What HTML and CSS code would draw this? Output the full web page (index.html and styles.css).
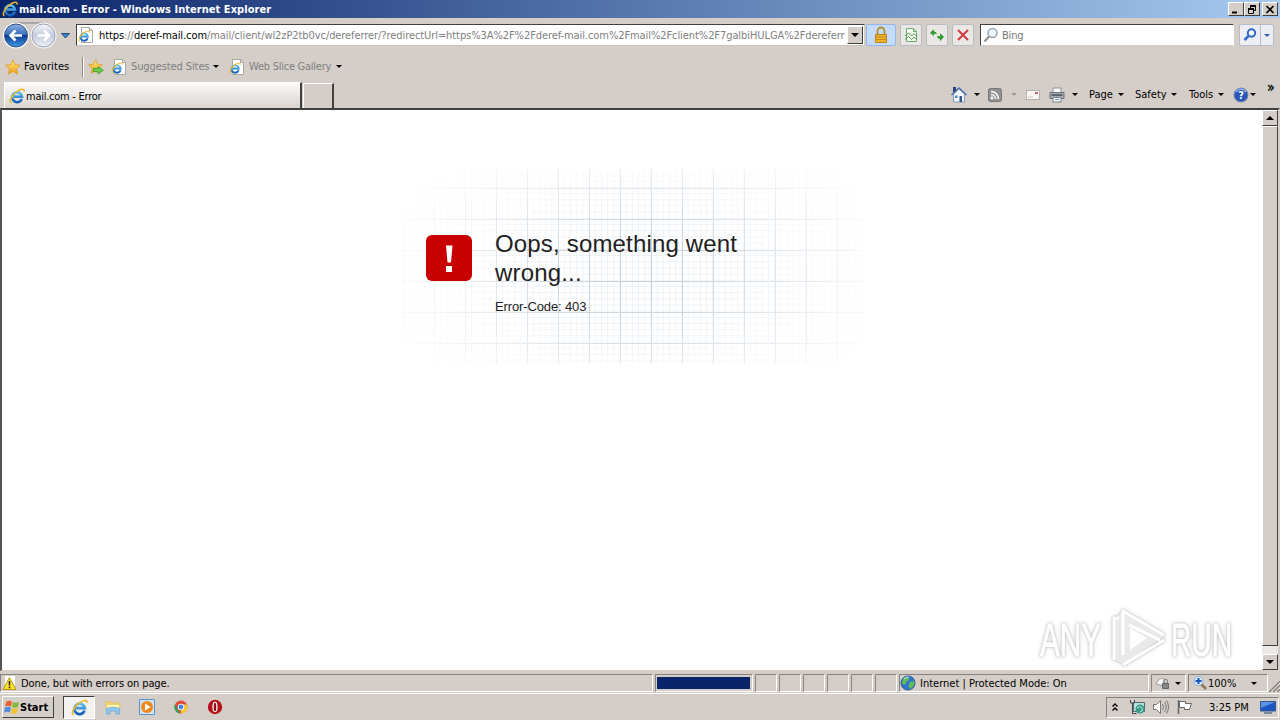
FILE: index.html
```
<!DOCTYPE html>
<html>
<head>
    <meta charset="utf-8">
    <title>mail.com - Error</title>
    <link rel="stylesheet" href="styles.css">
</head>
<body>
    <svg class="sprite" width="0" height="0">
        <defs>
            <linearGradient id="blueBall" x1="0" y1="0" x2="0" y2="1">
                <stop offset="0" stop-color="#8fb4e4"/>
                <stop offset=".48" stop-color="#3568b8"/>
                <stop offset=".5" stop-color="#0b3b92"/>
                <stop offset="1" stop-color="#3f9be8"/>
            </linearGradient>
            <linearGradient id="grayBall" x1="0" y1="0" x2="0" y2="1">
                <stop offset="0" stop-color="#f4f6fa"/>
                <stop offset=".5" stop-color="#c3cbdc"/>
                <stop offset="1" stop-color="#eef1f7"/>
            </linearGradient>
            <linearGradient id="gold" x1="0" y1="0" x2="0" y2="1">
                <stop offset="0" stop-color="#fff08a"/>
                <stop offset="1" stop-color="#f29a10"/>
            </linearGradient>
            <linearGradient id="sky" x1="0" y1="0" x2="0" y2="1">
                <stop offset="0" stop-color="#5cc0f4"/>
                <stop offset="1" stop-color="#1560b8"/>
            </linearGradient>
        </defs>
        <symbol id="ie" viewBox="0 0 16 16">
            <path d="M12.800 10.800A4.900 4.900 0 1 1 13 8.600H5" fill="none" stroke="url(#sky)" stroke-width="2.600"/>
            <path d="M2.500 14.800C-.5 14 2.500 7.600 7.400 4 11.500 1 15.800.1 15 3.600" fill="none" stroke="#eab72c" stroke-width="1.500"/>
        </symbol>
        <symbol id="iepage" viewBox="0 0 16 16">
            <path d="M3.500.5h8l3 3v12h-11z" fill="#fff" stroke="#a8a8a2"/>
            <path d="M11.500.5v3h3" fill="none" stroke="#a8a8a2"/>
            <use href="#ie" x="0" y="3" width="12" height="12"/>
        </symbol>
        <symbol id="star" viewBox="0 0 16 16">
            <path d="M8 .8l2.200 4.900 5.200.5-3.900 3.600 1.100 5.300L8 12.400l-4.600 2.700 1.100-5.300L.6 6.200l5.200-.5z" fill="url(#gold)" stroke="#d99a20" stroke-width=".8"/>
        </symbol>
    </svg>

    <div class="titlebar">
        <svg class="i16"><use href="#ie"/></svg>
        <span class="caption">mail.com - Error - Windows Internet Explorer</span>
        <div class="winbtns">
            <span class="winbtn"><svg width="10" height="9"><path d="M1 7.500h5" stroke="#000" stroke-width="2"/></svg></span>
            <span class="winbtn"><svg width="10" height="9"><path d="M3 1h6M1 4h6" stroke="#000" stroke-width="2"/><path d="M3.500 2v2M8.500 2v3.500H7M1.500 4v4.500h5V4" fill="none" stroke="#000"/></svg></span>
            <span class="winbtn close"><svg width="10" height="9"><path d="M1.500 1l7 7M8.500 1l-7 7" stroke="#000" stroke-width="1.700"/></svg></span>
        </div>
    </div>

    <div class="nav">
        <svg class="balls" width="72" height="30" viewBox="0 0 72 30">
            <path d="M14 3h30" stroke="#a8a6a8" stroke-width="2"/>
            <circle cx="16" cy="15.500" r="13" fill="#fff"/>
            <circle cx="43.500" cy="15.500" r="13" fill="#f4f4f6"/>
            <circle cx="16" cy="15.500" r="11.500" fill="url(#blueBall)" stroke="#34507e"/>
            <circle cx="43.500" cy="15.500" r="11.500" fill="url(#grayBall)" stroke="#98a0b0"/>
            <path d="M22 15.500H11M15.500 10.500L10.500 15.500l5 5" fill="none" stroke="#fff" stroke-width="2.600"/>
            <path d="M37.500 15.500h11M44 10.500l5 5-5 5" fill="none" stroke="#fff" stroke-width="2.600"/>
            <path d="M61.500 13.500h8l-4 4.500z" fill="#3b87c4" stroke="#1d4a80"/>
        </svg>
        <div class="address">
            <svg class="i16"><use href="#iepage"/></svg>
            <span class="url"><b>https</b>://<b>deref-mail.com</b>/mail/client/wl2zP2tb0vc/dereferrer/?redirectUrl=https%3A%2F%2Fderef-mail.com%2Fmail%2Fclient%2F7galbiHULGA%2Fdereferr</span>
            <span class="dropbtn"><i class="arrow big"></i></span>
        </div>
        <span class="tool lock"><svg width="16" height="18" viewBox="0 0 16 18"><path d="M4.500 9V5a3.500 3.500 0 0 1 7 0v4" fill="none" stroke="#b98a28" stroke-width="1.800"/><path d="M2.500 8.500h11v8h-11z" fill="#eeb42c" stroke="#b98218"/><path d="M3 11h10M3 13.500h10" stroke="#c98d18"/></svg></span>
        <span class="tool"><svg width="16" height="16"><path d="M3.500 1.500h7l3 3v10h-10zM10.500 1.500v3h3" fill="#f4faf2" stroke="#6fae6c"/><path d="M2 9l3.500-3 3 3L11 6.500l3 3M2 12.500l3.500-3 3 3L11 10l3 3" fill="none" stroke="#4a9e4a"/></svg></span>
        <span class="tool"><svg width="14" height="14" viewBox="0 0 16 16"><path d="M0 5.500l4.500-4v2.500q3 0 3.500 3l-3.500-.5v3zM16 10l-4.500 5v-2.500q-3 0-3.500-3.500l3.500.5V6z" fill="#2f9a38"/></svg></span>
        <span class="tool"><svg width="16" height="16"><path d="M3 3l10 10M13 3L3 13" stroke="#cf3a3e" stroke-width="2"/></svg></span>
        <div class="search">
            <svg width="16" height="16"><circle cx="9.500" cy="6" r="4.500" fill="#eef5fb" stroke="#98a6b4" stroke-width="1.500"/><path d="M6 9.500L1.500 14.500" stroke="#8d8d90" stroke-width="2"/></svg>
            <span>Bing</span>
        </div>
        <div class="searchbtns">
            <span><svg width="16" height="16"><circle cx="9.500" cy="6" r="3.700" fill="#f4f8ff" stroke="#2e68c8" stroke-width="2"/><path d="M6.500 9L2.500 13" stroke="#2e68c8" stroke-width="2.500"/></svg></span>
            <span class="narrow"><i class="arrow blue"></i></span>
        </div>
    </div>

    <div class="favbar">
        <svg class="i16"><use href="#star"/></svg>
        <span class="favs">Favorites</span>
        <i class="divider"></i>
        <svg class="i16 addfav" viewBox="0 0 16 16"><use href="#star" width="15" height="15"/><path d="M5.500 9.500h4.500V7.500l5.300 3.700-5.300 3.800v-2.300H5.500z" fill="#6ccb45" stroke="#3a9a30" stroke-width=".8"/></svg>
        <svg class="i16 link1"><use href="#iepage"/></svg>
        <span class="gray sugg">Suggested Sites</span>
        <i class="arrow"></i>
        <svg class="i16 link2"><use href="#iepage"/></svg>
        <span class="gray slice">Web Slice Gallery</span>
        <i class="arrow"></i>
    </div>

    <div class="tabrow">
        <div class="tab"><svg class="i16"><use href="#ie"/></svg><span class="tabtitle">mail.com - Error</span></div>
        <div class="newtab"></div>
        <div class="commands">
            <svg class="home" width="16" height="17" viewBox="0 0 16 17"><path d="M2.500 8v8h11V8L8 3z" fill="#f3f6fa" stroke="#8d9bb0"/><path d="M.5 9L8 2l7.500 7" fill="none" stroke="#4a74b0" stroke-width="1.500"/><path d="M2 1h3v3.500l-3 2z" fill="#27407c"/><path d="M8.500 10h2.500v6H8.500z" fill="#31558c"/><path d="M4 9.500h2.500V12H4z" fill="#4a90c8"/></svg>
            <i class="arrow"></i>
            <svg class="feed" width="14" height="14"><rect x=".5" y=".5" width="13" height="13" rx="2" fill="#929292" stroke="#777"/><circle cx="4" cy="10" r="1.400" fill="#fff"/><path d="M3 6.500a4.500 4.500 0 0 1 4.500 4.500M3 3.500a7.500 7.500 0 0 1 7.500 7.500" fill="none" stroke="#fff" stroke-width="1.500"/></svg>
            <i class="arrow dim"></i>
            <svg class="mail" width="14" height="10"><rect x=".5" y=".5" width="13" height="9" fill="#f7f5f3" stroke="#b6b0aa"/><path d="M9 2h3v2H9z" fill="#c66"/><path d="M2 7h5" stroke="#c9c5c0"/></svg>
            <svg class="print" width="16" height="16"><path d="M4 5.500V1h8v4.500" fill="#fff" stroke="#8a8f98"/><path d="M1 5.500h14v6H1z" fill="#a9afb6" stroke="#6b7179"/><path d="M2.500 8h11" stroke="#4a4f56" stroke-width="1.500"/><path d="M4 10.500h8v4.500H4z" fill="#f4f6f8" stroke="#7a828c"/><path d="M6 12.500h4" stroke="#6aa0d0"/></svg>
            <i class="arrow"></i>
            <span class="cmd page">Page</span><i class="arrow"></i>
            <span class="cmd safety">Safety</span><i class="arrow"></i>
            <span class="cmd tools">Tools</span><i class="arrow"></i>
            <svg class="help" width="16" height="16"><circle cx="8" cy="8" r="7" fill="#2a55b8" stroke="#6f86b0"/><path d="M3 5a6 6 0 0 1 10 0" fill="none" stroke="#8fb2ec" stroke-width="1.500"/><text x="8" y="12" text-anchor="middle" class="q">?</text></svg>
            <i class="arrow"></i>
            <span class="more">»</span>
        </div>
    </div>

    <div class="view">
        <div class="page-area">
            <div class="grid">
                <div class="minor"></div>
                <div class="major"></div>
            </div>
            <div class="error">
                <div class="badge"><svg width="46" height="46"><path d="M20 10.500h6.500l-1.500 17h-3.500zM20 31h6v6h-6z" fill="#fff"/></svg></div>
                <div class="message">
                    <h1>Oops, something went wrong...</h1>
                    <p>Error-Code: 403</p>
                </div>
            </div>
            <svg class="watermark" width="210" height="64" viewBox="0 0 210 64">
                <text x="4" y="50" class="wm" textLength="61" lengthAdjust="spacingAndGlyphs">ANY</text>
                <text x="135" y="50" class="wm" textLength="61" lengthAdjust="spacingAndGlyphs">RUN</text>
                <path class="tri-fill" d="M79 14l7-9 43 25-41 28-9-4z"/>
                <path class="hole" d="M94 22l17 10-17 12z"/>
                <path class="tri" d="M87 49V5l41 24M93 19l31 15M87 59l41-25"/>
                <path class="tri" d="M78 54V12h5"/>
            </svg>
        </div>
        <div class="scrollbar">
            <span class="sbtn"><i class="arrow big up"></i></span>
            <span class="thumb"></span>
            <span class="sbtn last"><i class="arrow big"></i></span>
        </div>
    </div>

    <div class="status">
        <div class="cell done"><svg class="i16"><path d="M3 1h10v14H3z" fill="#fff"/><path d="M7.500 2.500l6.500 12H1z" fill="#ffe02e" stroke="#b89a10"/><path d="M7.500 6v4.500M7.500 11.500v1.800" stroke="#222" stroke-width="1.500"/></svg><span class="donetext">Done, but with errors on page.</span></div>
        <div class="cell progress"><span></span></div>
        <div class="cell mini"></div>
        <div class="cell mini"></div>
        <div class="cell mini"></div>
        <div class="cell mini"></div>
        <div class="cell mini"></div>
        <div class="cell mini"></div>
        <div class="cell zone">
            <svg class="i16"><circle cx="8" cy="8" r="7" fill="#3276cc" stroke="#33589c"/><path d="M3 4c3-3 6-2 6 0s-3 2-3 4-3 2-4 0zM10 7l4-1c1 4-1 6-4 8-2-2-1-4 0-7z" fill="#63bd55"/><path d="M4 4a6 6 0 0 1 5-2" stroke="#c4e7f8" fill="none"/></svg>
            <span class="zonetext">Internet | Protected Mode: On</span>
        </div>
        <div class="cell prot"><svg class="i16"><path d="M1 9c3-6 6-6 8-5v7z" fill="#f8f8f8" stroke="#999"/><path d="M7.500 8.500h6v5h-6z" fill="#858585" stroke="#666"/><path d="M9 8V6a1.700 1.700 0 0 1 3.400 0v2" fill="none" stroke="#777"/></svg><i class="arrow"></i></div>
        <div class="cell zoom"><svg class="i16"><path d="M9 9l5 5" stroke="#8c7852" stroke-width="2.500"/><circle cx="6.500" cy="6" r="4.500" fill="#dceefa" stroke="#7fb0dc"/><path d="M6.500 3v6M3.500 6h6" stroke="#1554b8" stroke-width="2"/></svg><span>100%</span><i class="arrow"></i></div>
        <svg class="grip" width="12" height="14"><path d="M0 14L12 2M4 14l8-8M8 14l4-4" stroke="#fff"/><path d="M1 14L12 3M5 14l7-7M9 14l3-3" stroke="#807c76" stroke-width="1.500"/></svg>
    </div>

    <div class="taskbar">
        <div class="start"><svg class="i16" viewBox="0 0 16 16"><path d="M2.500 2.500Q5 1 8 2.500L7 7.500Q4 6 1 7.500z" fill="#e8602c"/><path d="M9 3q3 1.500 6 0l-1.200 5Q11 9.500 8 8z" fill="#83ba36"/><path d="M1 8.500q3-1.500 6 0l-1.200 5Q3 12 0 13.500z" fill="#4f8edc"/><path d="M8 9q3 1.500 6 0l-1.200 5Q10 15.500 7 14z" fill="#f6c02c"/></svg><span>Start</span></div>
        <div class="task active"><svg width="17" height="17"><use href="#ie"/></svg></div>
        <svg class="app" width="16" height="16"><path d="M1 2.500h5l1.500 1.500H15v6H1z" fill="#f0d46e" stroke="#dcc070"/><path d="M2 6h12v3H2z" fill="#fff3b5"/><path d="M1.500 15V9.500Q8 7 14.500 9.500V15H11v-3H5v3z" fill="#8fc8ea" stroke="#7ab2da"/></svg>
        <svg class="app" width="16" height="16"><path d="M.5.5h15v15H.5z" fill="#cfe3f5" stroke="#5b94c8"/><circle cx="8" cy="8" r="6" fill="#ef8a1a"/><path d="M6 4.500l5.500 3.500L6 11.500z" fill="#fff"/></svg>
        <svg class="app" width="16" height="16"><circle cx="8" cy="8" r="6.500" fill="#e04a38"/><path d="M2 5l5 9.500A6.500 6.500 0 0 1 2 5z" fill="#36a354"/><path d="M8 14.500A6.500 6.500 0 0 0 14 5.500H8z" fill="#f9cb31"/><circle cx="8" cy="8" r="3.200" fill="#fff"/><circle cx="8" cy="8" r="2.400" fill="#4484ec"/></svg>
        <svg class="app" width="16" height="16"><circle cx="8" cy="8" r="7.200" fill="#b8101a"/><ellipse cx="8" cy="8" rx="2.600" ry="5.200" fill="#fff"/><ellipse cx="8" cy="8" rx="1.300" ry="4.300" fill="#8e0a10"/></svg>
        <div class="tray">
            <svg class="chev" width="8" height="10"><path d="M1.500 4.500L4 2l2.500 2.500M1.500 8.500L4 6l2.500 2.500" fill="none" stroke="#000" stroke-width="1.400"/></svg>
            <svg class="net" width="16" height="16"><path d="M4.500 3.500h11v9h-11z" fill="#b9e2da" stroke="#4c6d70"/><circle cx="11" cy="10" r="4.500" fill="#3a9a8c"/><path d="M8 9q3-3 5 0t-2 4" fill="none" stroke="#c0efcb"/><path d="M1.500 1v3h4V1M3.500 4v10.500h4" fill="none" stroke="#445"/></svg>
            <svg class="vol" width="16" height="16"><path d="M.5 5.500h3l4-4v13l-4-4h-3z" fill="#fff" stroke="#777"/><path d="M9.500 5q2 3 0 6M11.500 3q3.500 5 0 10M13.500 1.500q4 6.500 0 13" fill="none" stroke="#777"/></svg>
            <svg class="flag" width="16" height="16"><path d="M1.500 1v14" stroke="#666" stroke-width="1.500"/><path d="M2.500 2.500h6v2h6l-2 6h-5v-2h-5z" fill="#fff" stroke="#666"/></svg>
            <span class="clock">3:25 PM</span>
            <svg class="desk" width="16" height="13"><path d="M.5.500h15v9.500H.5z" fill="#1d55c2" stroke="#35548c"/><path d="M1 1h14L1 7z" fill="#5a94e6"/><path d="M4 12h8" stroke="#5b7088" stroke-width="1.500"/></svg>
        </div>
    </div>
</body>
</html>
```
FILE: styles.css
```
* {
    box-sizing: border-box;
}
body {
    margin: 0;
    width: 1280px;
    height: 720px;
    overflow: hidden;
    display: flex;
    flex-direction: column;
    background: #d5cec8;
    color: #000;
    font-family: "DejaVu Sans Condensed", "DejaVu Sans", sans-serif;
    font-stretch: condensed;
    font-size: 11px;
    white-space: nowrap;
}
svg {
    display: block;
    flex: none;
}
.sprite {
    position: absolute;
}
.i16 {
    width: 16px;
    height: 16px;
}
.arrow {
    flex: none;
    width: 0;
    height: 0;
    border: 3px solid transparent;
    border-top-color: #000;
    border-bottom: 0;
}
.arrow.big {
    border-width: 4px;
    border-bottom: 0;
}
.arrow.up {
    transform: rotate(180deg);
}
.arrow.dim {
    border-top-color: #999;
}
.arrow.blue {
    border-top-color: #2d62b0;
}

/* title bar */
.titlebar {
    height: 18px;
    flex: none;
    display: flex;
    align-items: center;
    padding: 0 2px;
    background: linear-gradient(to right, #0a246a, #a6caf0);
    color: #fff;
    font-weight: bold;
}
.caption {
    margin-left: 1px;
    letter-spacing: .04px;
}
.winbtns {
    margin-left: auto;
    display: flex;
}
.winbtn {
    width: 16px;
    height: 14px;
    padding: 2px;
    background: #d5cec8;
    border: 1px solid;
    border-color: #fff #404040 #404040 #fff;
}
.winbtn.close {
    margin-left: 2px;
}

/* address row */
.nav {
    height: 35px;
    flex: none;
    display: flex;
    align-items: flex-start;
    padding-top: 6px;
}
.balls {
    margin-top: -4px;
}
.address {
    margin-left: 4px;
    width: 789px;
    height: 22px;
    display: flex;
    align-items: center;
    padding-left: 1px;
    background: #fff;
    border: 1px solid;
    border-color: #404040 #d5cec8 #c8c4ba #404040;
}
.url {
    flex: 1;
    margin-left: 5px;
    padding-top: 1px;
    color: #808080;
    letter-spacing: -.078px;
}
.url b {
    font-weight: normal;
    color: #000;
}
.dropbtn {
    width: 16px;
    height: 18px;
    margin-right: 1px;
    display: flex;
    align-items: center;
    justify-content: center;
    background: #d5cec8;
    border: 1px solid;
    border-color: #fff #404040 #404040 #fff;
}
.tool {
    width: 22px;
    height: 22px;
    margin-left: 4px;
    display: flex;
    align-items: center;
    justify-content: center;
    background: #eae7e4;
    border: 1px solid #b9bcc4;
    border-radius: 2px;
}
.tool.lock {
    width: 30px;
    margin-left: 1px;
    background: #c4dcfa;
    border-color: #94b6e8;
}
.search {
    margin-left: 6px;
    width: 254px;
    height: 22px;
    display: flex;
    align-items: center;
    padding-left: 2px;
    background: #fff;
    color: #777;
    border: 1px solid;
    border-color: #404040 #fff #d5cec8 #404040;
}
.search span {
    margin-left: 3px;
    padding-top: 1px;
    letter-spacing: -.2px;
}
.searchbtns {
    margin-left: 5px;
    display: flex;
    height: 22px;
    background: #eceef3;
    border: 1px solid #b4bdcc;
    border-radius: 2px;
}
.searchbtns span {
    width: 20px;
    display: flex;
    align-items: center;
    justify-content: center;
}
.searchbtns .narrow {
    width: 13px;
    border-left: 1px solid #b4bdcc;
}

/* favorites row */
.favbar {
    height: 28px;
    flex: none;
    display: flex;
    align-items: center;
    padding: 0 0 1px 5px;
}
.favs {
    width: 46px;
    margin-left: 3px;
    letter-spacing: .08px;
}
.divider {
    width: 2px;
    height: 20px;
    margin: 0 4px 0 12px;
    border-left: 1px solid #888;
    border-right: 1px solid #fff;
}
.link1 {
    margin-left: 7px;
}
.link2 {
    margin-left: 10px;
}
.gray {
    color: #808080;
    margin-left: 4px;
    letter-spacing: -.1px;
}
.sugg {
    width: 78px;
    margin-right: 4px;
}
.slice {
    width: 82px;
    margin-right: 5px;
    letter-spacing: -.25px;
}

/* tabs and command bar */
.tabrow {
    height: 27px;
    flex: none;
    display: flex;
    align-items: flex-end;
    padding-left: 4px;
}
.tab {
    width: 298px;
    height: 26px;
    display: flex;
    align-items: center;
    padding-left: 4px;
    background: linear-gradient(#fbfbfa, #d9d4cf);
    border: 1px solid #fff;
    border-right: 2px solid #404040;
    border-bottom: 0;
}
.tabtitle {
    margin-left: 1px;
    padding-top: 1px;
    letter-spacing: -.25px;
}
.newtab {
    width: 31px;
    height: 25px;
    margin-left: 1px;
    border: 1px solid #fff;
    border-right: 2px solid #404040;
    border-bottom: 0;
}
.commands {
    flex: 1;
    height: 27px;
    padding-left: 617px;
    display: flex;
    align-items: center;
}
.home + .arrow {
    margin-left: 7px;
}
.feed {
    margin-left: 8px;
}
.feed + .arrow {
    margin-left: 9px;
}
.mail {
    margin-left: 9px;
}
.print {
    margin-left: 9px;
}
.print + .arrow {
    margin-left: 7px;
}
.cmd {
    margin-left: 11px;
}
.page {
    width: 24px;
}
.safety {
    width: 32px;
}
.tools {
    width: 25px;
    margin-left: 12px;
}
.cmd + .arrow {
    margin-left: 4px;
}
.page + .arrow {
    margin-left: 5px;
}
.help {
    margin-left: 9px;
}
.q {
    font-size: 11px;
    font-weight: bold;
    fill: #fff;
}
.help + .arrow {
    margin-left: 1px;
}
.more {
    margin: -16px 0 0 11px;
    font-size: 14px;
    -webkit-text-stroke: .3px #000;
}

/* page */
.view {
    height: 563px;
    flex: none;
    display: flex;
    background: #fff;
    border: 2px solid;
    border-color: #404040 #d5cec8 #d5cec8 #555;
    border-bottom-width: 1px;
}
.page-area {
    position: relative;
    flex: 1;
    padding: 125px 0 0 424px;
}
.grid {
    position: absolute;
    left: 396px;
    top: 59px;
    width: 466px;
    height: 195px;
    -webkit-mask-image: radial-gradient(ellipse 270px 165px at 240px 105px, #000 0, rgba(0, 0, 0, .8) 30%, rgba(0, 0, 0, .35) 65%, transparent 100%);
    mask-image: radial-gradient(ellipse 270px 165px at 240px 105px, #000 0, rgba(0, 0, 0, .8) 30%, rgba(0, 0, 0, .35) 65%, transparent 100%);
}
.minor,
.major {
    position: absolute;
    inset: 0;
}
.minor {
    background-image: linear-gradient(to right, #e9eff4 1px, transparent 1px), linear-gradient(#e9eff4 1px, transparent 1px);
    background-size: 6.200px 6.200px;
    background-position: 5px 18px;
}
.major {
    background-image: linear-gradient(to right, #c3ced9 1px, transparent 1px), linear-gradient(#c3ced9 1px, transparent 1px);
    background-size: 31px 31px;
    background-position: 5px 19px;
}
.error {
    position: relative;
    display: flex;
    font-family: "Liberation Sans", Arial, sans-serif;
    font-stretch: normal;
    color: #222;
}
.badge {
    width: 46px;
    height: 46px;
    background: #c80000;
    border-radius: 6px;
}
.message {
    width: 300px;
    margin: -6px 0 0 23px;
    white-space: normal;
}
.message h1 {
    margin: 0;
    font-size: 24px;
    line-height: 29px;
    font-weight: normal;
    letter-spacing: .17px;
}
.message p {
    margin: 12px 0 0;
    font-size: 13px;
    line-height: 16px;
    letter-spacing: -.13px;
}
.watermark {
    position: absolute;
    left: 1034px;
    top: 496px;
    overflow: visible;
    fill: #fff;
    filter: drop-shadow(0 0 1px #bbb) drop-shadow(0 0 2px #ddd);
}
.wm {
    font-family: "Liberation Sans", Arial, sans-serif;
    font-stretch: normal;
    font-size: 47px;
    stroke: #fff;
    stroke-width: 1px;
}
.tri-fill {
    fill: #e9e9e9;
}
.hole {
    fill: #fff;
}
.tri {
    fill: none;
    stroke: #fff;
    stroke-width: 3px;
}
.scrollbar {
    width: 16px;
    display: flex;
    flex-direction: column;
    background: #ebe8e5;
}
.sbtn,
.thumb {
    background: #d5cec8;
    border: 1px solid;
    border-color: #fff #404040 #404040 #fff;
}
.sbtn {
    height: 16px;
    flex: none;
    display: flex;
    align-items: center;
    justify-content: center;
}
.thumb {
    height: 520px;
}
.sbtn.last {
    margin-top: auto;
}

/* status bar */
.status {
    height: 21px;
    flex: none;
    display: flex;
    margin-top: 2px;
    padding-top: 1px;
    border-bottom: 1px solid #fff;
}
.cell {
    height: 18px;
    flex: none;
    display: flex;
    align-items: center;
    margin-right: 2px;
    border: 1px solid;
    border-color: #85817c #fff #fff #85817c;
}
.done {
    width: 653px;
    padding-left: 1px;
}
.donetext {
    margin-left: 3px;
    letter-spacing: -.1px;
}
.progress {
    width: 98px;
    padding: 2px 1px;
}
.progress span {
    width: 93px;
    height: 12px;
    background: #0a246a;
}
.mini {
    width: 22px;
}
.zone {
    width: 250px;
}
.zonetext {
    margin-left: 4px;
}
.prot {
    width: 35px;
    padding-left: 3px;
}
.prot .arrow {
    margin-left: 4px;
}
.zoom {
    width: 80px;
    padding-left: 3px;
}
.zoom .arrow {
    margin-left: auto;
    margin-right: 10px;
}
.grip {
    margin: 4px 0 0 -2px;
}

/* taskbar */
.taskbar {
    flex: 1;
    display: flex;
    align-items: center;
    padding-left: 2px;
}
.start {
    width: 52px;
    height: 22px;
    display: flex;
    align-items: center;
    padding-left: 1px;
    font-weight: bold;
    border: 1px solid;
    border-color: #fff #404040 #404040 #fff;
}
.task {
    width: 32px;
    height: 23px;
    margin-left: 9px;
    display: flex;
    align-items: center;
    justify-content: center;
}
.task.active {
    background: #f4f2f0;
    border: 1px solid;
    border-color: #404040 #fff #fff #404040;
}
.app {
    margin-left: 18px;
}
.task + .app {
    margin-left: 10px;
}
.tray {
    width: 173px;
    height: 21px;
    margin-left: auto;
    margin-right: 1px;
    display: flex;
    align-items: center;
    border: 1px solid;
    border-color: #85817c #fff #fff #85817c;
}
.chev {
    margin-left: 4px;
}
.net {
    margin-left: 10px;
}
.vol,
.flag {
    margin-left: 8px;
}
.clock {
    width: 40px;
    margin-left: 16px;
}
.desk {
    margin-left: 11px;
}
```
